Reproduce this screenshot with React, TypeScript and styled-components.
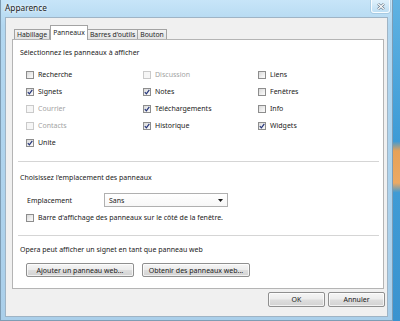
import React from "react";
import styled, { createGlobalStyle } from "styled-components";

const GlobalStyle = createGlobalStyle`
  html, body { margin: 0; padding: 0; }
  body {
    width: 400px;
    height: 321px;
    overflow: hidden;
    background: linear-gradient(180deg, #5fb2e2 0%, #3d9bd6 44%, #e7a158 47%, #eca963 57%, #3f9bd5 60%, #3a93cf 100%);
    font-family: "Noto Sans", "DejaVu Sans", sans-serif;
  }
`;

const Window = styled.div`
  width: 393px;
  height: 321px;
  box-sizing: border-box;
  display: flex;
  flex-direction: column;
  background: linear-gradient(180deg, #c7e5f8 0%, #b2d7f0 8%, #aacfea 100%);
  border-left: 1px solid #7f9db4;
  border-right: 1px solid #7f9db4;
  border-bottom: 1px solid #7f9db4;
  padding: 0 4px 3px 4px;
`;

const TitleBar = styled.div`
  height: 17px;
  display: flex;
  align-items: flex-start;
  justify-content: space-between;
`;

const Title = styled.span`
  margin-top: 3px;
  font-size: 8.3px;
  line-height: 10px;
  color: #1c1c1c;
  text-shadow: 0 0 3px rgba(255, 255, 255, 0.95), 0 0 5px rgba(255, 255, 255, 0.8);
`;

const CloseButton = styled.div`
  width: 19px;
  height: 13px;
  margin-right: -2px;
  box-sizing: border-box;
  border: 1px solid rgba(255, 255, 255, 0.85);
  border-top: none;
  border-radius: 0 0 3px 3px;
  background: linear-gradient(180deg, rgba(235, 246, 253, 0.7), rgba(190, 222, 243, 0.7));
  box-shadow: 0 0 0 1px rgba(120, 160, 190, 0.3);
  display: flex;
  align-items: center;
  justify-content: center;
`;

const Client = styled.div`
  flex: 1;
  box-sizing: border-box;
  background: #f0f0f0;
  border: 1px solid #9fb4c5;
  padding: 7px 3px 0 6px;
  display: flex;
  flex-direction: column;
`;

const TabRow = styled.div`
  display: flex;
  align-items: flex-end;
  height: 15px;
  padding-left: 2px;
  margin-bottom: -1px;
  position: relative;
  z-index: 1;
`;

const Tab = styled.div<{ $active?: boolean }>`
  box-sizing: border-box;
  height: ${(p) => (p.$active ? "15px" : "10px")};
  margin-bottom: ${(p) => (p.$active ? "0" : "1px")};
  padding: ${(p) => (p.$active ? "2px 2px 0" : "0 2px")};
  border: 1px solid #a3a3a3;
  border-bottom: none;
  border-left-width: ${(p) => (p.$active ? "1px" : "0")};
  background: ${(p) => (p.$active ? "#ffffff" : "linear-gradient(180deg, #f3f3f3, #e3e3e3)")};
  font-size: 6.8px;
  line-height: 9px;
  color: #1f1f1f;
  white-space: nowrap;
  &:first-child { border-left-width: 1px; }
`;

const Panel = styled.div`
  height: 250px;
  box-sizing: border-box;
  background: #ffffff;
  border: 1px solid #b4b4b4;
  padding: 0 4px 0 5px;
  display: flex;
  flex-direction: column;
`;

const Heading = styled.div<{ $top: number }>`
  margin-top: ${(p) => p.$top}px;
  padding-left: 2px;
  font-size: 7px;
  line-height: 10px;
  height: 10px;
  color: #1a1a1a;
  white-space: nowrap;
`;

const CheckGrid = styled.div`
  margin-top: 8px;
  padding-left: 8px;
  display: grid;
  grid-template-columns: 117px 115px 1fr;
  grid-auto-rows: 17px;
  align-items: center;
`;

const CheckItem = styled.div<{ $disabled?: boolean }>`
  display: flex;
  align-items: center;
  gap: 4px;
  font-size: 7px;
  line-height: 10px;
  color: ${(p) => (p.$disabled ? "#a3a3a3" : "#1a1a1a")};
  white-space: nowrap;
`;

const Box = styled.span<{ $disabled?: boolean }>`
  width: 8px;
  height: 8px;
  flex: none;
  box-sizing: border-box;
  border: 1px solid ${(p) => (p.$disabled ? "#cacaca" : "#8d8d8d")};
  background: ${(p) =>
    p.$disabled ? "#f6f6f6" : "linear-gradient(135deg, #d9d9d9 0%, #efefef 60%, #fbfbfb 100%)"};
  display: flex;
  align-items: center;
  justify-content: center;
`;

const Separator = styled.div<{ $top: number }>`
  margin-top: ${(p) => p.$top}px;
  height: 1px;
  background: #d5d5d5;
`;

const FieldRow = styled.div`
  margin-top: 10px;
  padding-left: 9px;
  height: 14px;
  display: flex;
  align-items: center;
`;

const FieldLabel = styled.span`
  width: 77px;
  font-size: 7px;
  color: #1a1a1a;
`;

const Select = styled.div`
  width: 124px;
  height: 14px;
  box-sizing: border-box;
  border: 1px solid #b0b0b0;
  background: linear-gradient(180deg, #ffffff, #f7f7f7);
  display: flex;
  align-items: center;
  justify-content: space-between;
  padding: 0 4px 0 4px;
  font-size: 7px;
  color: #1a1a1a;
`;

const SingleCheck = styled.div`
  margin-top: 6px;
  padding-left: 8px;
  height: 10px;
  display: flex;
  align-items: center;
`;

const ButtonRow = styled.div`
  margin-top: 8px;
  padding-left: 8px;
  display: flex;
  gap: 8px;
`;

const Button = styled.div<{ $w: number; $h?: number }>`
  width: ${(p) => p.$w}px;
  height: ${(p) => p.$h ?? 14}px;
  box-sizing: border-box;
  border: 1px solid #8f8f8f;
  border-radius: 2px;
  background: linear-gradient(180deg, #f5f5f5 0%, #ececec 48%, #dedede 52%, #d2d2d2 100%);
  box-shadow: inset 0 0 0 1px rgba(255, 255, 255, 0.7);
  display: flex;
  align-items: center;
  justify-content: center;
  font-size: 7px;
  color: #1a1a1a;
  white-space: nowrap;
`;

const Footer = styled.div`
  margin-top: 3px;
  margin-right: -1px;
  display: flex;
  justify-content: flex-end;
  gap: 3px;
`;

const Check = ({ checked, disabled }: { checked?: boolean; disabled?: boolean }) => (
  <Box $disabled={disabled}>
    {checked && (
      <svg width="6" height="6" viewBox="0 0 6 6">
        <path d="M0.8 3.2 L2.4 4.9 L5.3 0.9" fill="none" stroke="#25357a" strokeWidth="1.2" />
      </svg>
    )}
  </Box>
);

type Item = { label: string; checked?: boolean; disabled?: boolean };

const items: Item[] = [
  { label: "Recherche" },
  { label: "Discussion", disabled: true },
  { label: "Liens" },
  { label: "Signets", checked: true },
  { label: "Notes", checked: true },
  { label: "Fenêtres" },
  { label: "Courrier", disabled: true },
  { label: "Téléchargements", checked: true },
  { label: "Info" },
  { label: "Contacts", disabled: true },
  { label: "Historique", checked: true },
  { label: "Widgets", checked: true },
  { label: "Unite", checked: true },
];

export default function App() {
  return (
    <>
      <GlobalStyle />
      <Window>
        <TitleBar>
          <Title>Apparence</Title>
          <CloseButton>
            <svg width="8" height="7" viewBox="0 0 8 7">
              <path d="M1 0.8 L7 6.2 M7 0.8 L1 6.2" stroke="#5c6c7c" strokeWidth="2.4" />
              <path d="M1 0.8 L7 6.2 M7 0.8 L1 6.2" stroke="#ffffff" strokeWidth="1.2" />
            </svg>
          </CloseButton>
        </TitleBar>
        <Client>
          <TabRow>
            <Tab>Habillage</Tab>
            <Tab $active>Panneaux</Tab>
            <Tab>Barres d'outils</Tab>
            <Tab>Bouton</Tab>
          </TabRow>
          <Panel>
            <Heading $top={8}>Sélectionnez les panneaux à afficher</Heading>
            <CheckGrid>
              {items.map((it, i) => (
                <CheckItem key={i} $disabled={it.disabled}>
                  <Check checked={it.checked} disabled={it.disabled} />
                  {it.label}
                </CheckItem>
              ))}
            </CheckGrid>
            <Separator $top={10} />
            <Heading $top={11}>Choisissez l'emplacement des panneaux</Heading>
            <FieldRow>
              <FieldLabel>Emplacement</FieldLabel>
              <Select>
                <span>Sans</span>
                <svg width="5" height="3" viewBox="0 0 5 3">
                  <path d="M0 0 L5 0 L2.5 3 Z" fill="#1a1a1a" />
                </svg>
              </Select>
            </FieldRow>
            <SingleCheck>
              <CheckItem>
                <Check />
                Barre d'affichage des panneaux sur le côté de la fenêtre.
              </CheckItem>
            </SingleCheck>
            <Separator $top={12} />
            <Heading $top={9}>Opera peut afficher un signet en tant que panneau web</Heading>
            <ButtonRow>
              <Button $w={108}>Ajouter un panneau web...</Button>
              <Button $w={108}>Obtenir des panneaux web...</Button>
            </ButtonRow>
          </Panel>
          <Footer>
            <Button $w={57} $h={15}>OK</Button>
            <Button $w={57} $h={15}>Annuler</Button>
          </Footer>
        </Client>
      </Window>
    </>
  );
}
